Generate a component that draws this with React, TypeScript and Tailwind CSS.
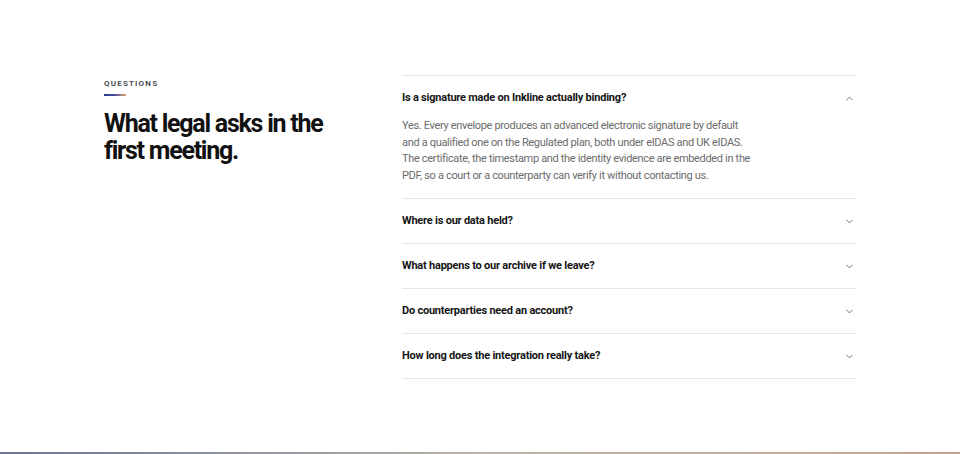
import React, { useState } from 'react';
import { ChevronDown, ChevronUp } from 'lucide-react';

const faqs = [
  {
    q: 'Is a signature made on Inkline actually binding?',
    a: 'Yes. Every envelope produces an advanced electronic signature by default and a qualified one on the Regulated plan, both under eIDAS and UK eIDAS. The certificate, the timestamp and the identity evidence are embedded in the PDF, so a court or a counterparty can verify it without contacting us.',
  },
  { q: 'Where is our data held?', a: '' },
  { q: 'What happens to our archive if we leave?', a: '' },
  { q: 'Do counterparties need an account?', a: '' },
  { q: 'How long does the integration really take?', a: '' },
];

const App: React.FC = () => {
  const [open, setOpen] = useState(0);

  return (
    <div className="h-screen flex flex-col bg-white font-['Roboto',sans-serif] text-[#111]">
      <section className="flex-1 pt-[75px]">
        <div className="mx-[104px] flex">
          {/* Left heading */}
          <div className="w-[298px] shrink-0 pt-[4px]">
            <p className="text-[8px] font-semibold tracking-[0.15em] text-[#3d3f47] leading-[10px]">QUESTIONS</p>
            <div className="mt-[5px] h-[2px] w-[22px] bg-gradient-to-r from-[#2b3a8c] via-[#4b4fa0] to-[#e8a25a]" />
            <h2 className="mt-[14px] max-w-[230px] text-[25px] font-bold leading-[27px] tracking-[-0.05em] text-[#111]">
              What legal asks in the first meeting.
            </h2>
          </div>

          {/* Accordion */}
          <div className="flex-1 border-t border-[#e6e6e6]">
            {faqs.map((f, i) => (
              <div key={f.q} className="border-b border-[#e6e6e6]">
                <button
                  onClick={() => setOpen(open === i ? -1 : i)}
                  className="w-full h-[44px] flex items-center justify-between text-left"
                >
                  <span className="text-[11px] font-bold tracking-[-0.02em] text-[#151515]">{f.q}</span>
                  {open === i ? (
                    <ChevronUp className="w-[11px] h-[11px] mr-[1px] text-[#555]" strokeWidth={1.75} />
                  ) : (
                    <ChevronDown className="w-[11px] h-[11px] mr-[1px] text-[#555]" strokeWidth={1.75} />
                  )}
                </button>
                {open === i && f.a && (
                  <p className="-mt-[2px] pb-[14px] max-w-[351px] text-[11px] leading-[16.5px] tracking-[-0.03em] text-[#6b6b6b]">
                    {f.a}
                  </p>
                )}
              </div>
            ))}
          </div>
        </div>
      </section>
      <div className="h-[2px] bg-gradient-to-r from-[#6c7595] via-[#b9b3a8] to-[#c7a48e]" />
    </div>
  );
};

export default App;
